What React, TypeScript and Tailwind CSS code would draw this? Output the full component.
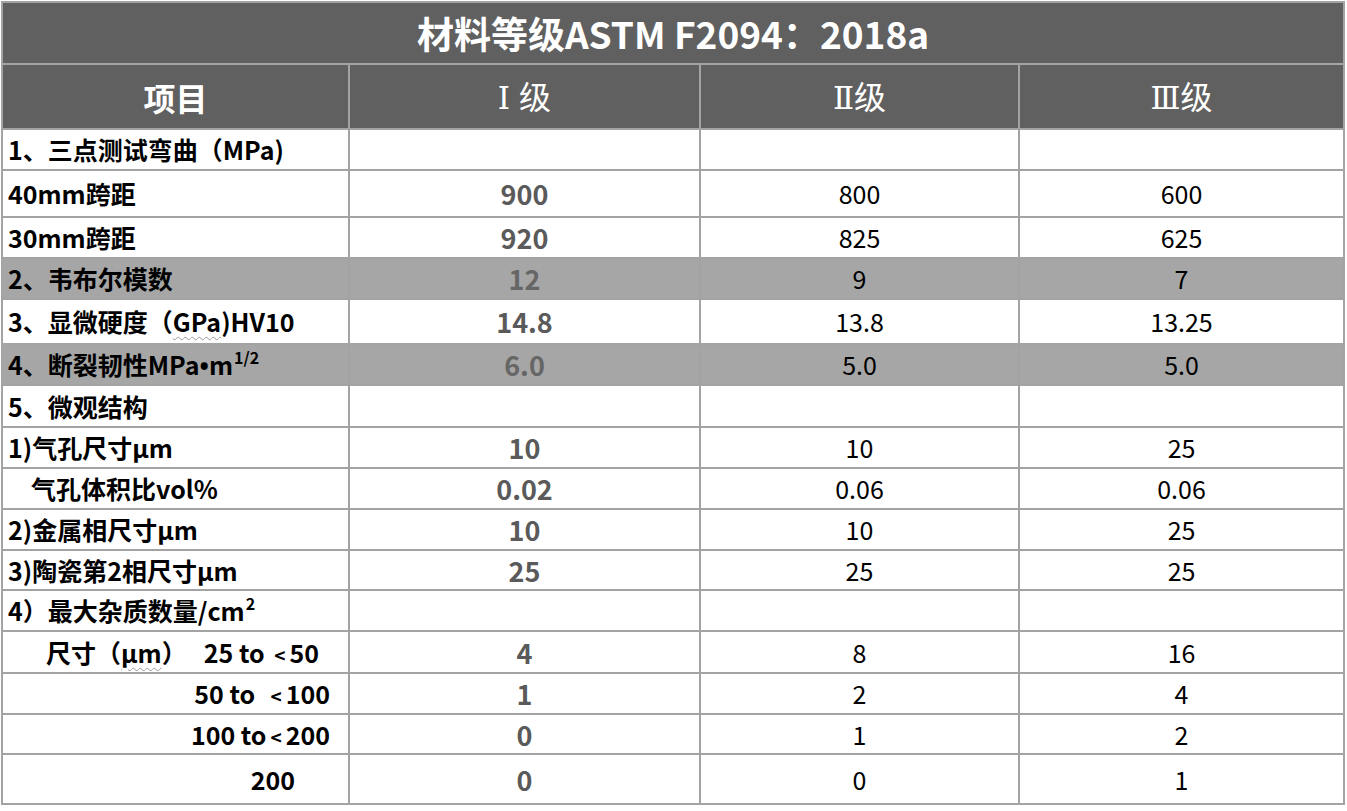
import React from "react";

type Row = {
  label: React.ReactNode;
  align?: "left" | "right";
  pad?: string;
  h: number;
  shade?: boolean;
  v?: [string, string, string];
};

const Wavy: React.FC<{ children: React.ReactNode }> = ({ children }) => (
  <span className="underline decoration-wavy decoration-[#9a9a9a] decoration-1 underline-offset-4">
    {children}
  </span>
);

const Sup: React.FC<{ children: React.ReactNode }> = ({ children }) => (
  <sup className="text-[16px] align-[3px] ml-[1px] font-bold">{children}</sup>
);

// small "<" like the reference's half-height glyph
const Lt = () => <span className="text-[19px] mx-[4px]">&lt;</span>;

const Roman: React.FC<{ children: React.ReactNode; gap?: boolean }> = ({ children, gap }) => (
  <span style={{ fontFamily: '"DejaVu Serif", serif' }} className={gap ? "text-[31px] mr-[9px]" : "text-[31px]"}>
    {children}
  </span>
);

const rows: Row[] = [
  { label: "1、三点测试弯曲（MPa)", h: 41 },
  { label: "40mm跨距", h: 47, v: ["900", "800", "600"] },
  { label: "30mm跨距", h: 41, v: ["920", "825", "625"] },
  { label: "2、韦布尔模数", h: 41, shade: true, v: ["12", "9", "7"] },
  {
    label: (
      <>
        3、显微硬度（<Wavy>GPa</Wavy>)HV10
      </>
    ),
    h: 45,
    v: ["14.8", "13.8", "13.25"],
  },
  {
    label: (
      <>
        4、断裂韧性MPa<span style={{ fontFamily: '"Open Sans", sans-serif' }}>•</span>m<Sup>1/2</Sup>
      </>
    ),
    h: 41,
    shade: true,
    v: ["6.0", "5.0", "5.0"],
  },
  { label: "5、微观结构", h: 42 },
  { label: "1)气孔尺寸μm", h: 41, v: ["10", "10", "25"] },
  { label: "气孔体积比vol%", pad: "pl-[28px]", h: 41, v: ["0.02", "0.06", "0.06"] },
  { label: "2)金属相尺寸μm", h: 41, v: ["10", "10", "25"] },
  { label: "3)陶瓷第2相尺寸μm", h: 40, v: ["25", "25", "25"] },
  {
    label: (
      <>
        4）最大杂质数量/cm<Sup>2</Sup>
      </>
    ),
    h: 41,
  },
  {
    label: (
      <>
        尺寸（<Wavy>μm</Wavy>）&nbsp;&nbsp;&nbsp;25 to <Lt />50
      </>
    ),
    pad: "pl-[43px]",
    h: 42,
    v: ["4", "8", "16"],
  },
  {
    label: (
      <>
        50 to  <Lt />100
      </>
    ),
    align: "right",
    pad: "pr-[18px]",
    h: 41,
    v: ["1", "2", "4"],
  },
  {
    label: (
      <>
        100 to<Lt />200
      </>
    ),
    align: "right",
    pad: "pr-[18px]",
    h: 40,
    v: ["0", "1", "2"],
  },
  { label: "200", align: "right", pad: "pr-[53px]", h: 50, v: ["0", "0", "1"] },
];

const border = "border-2 border-[#a3a3a3]";

export default function App() {
  return (
    <div
      className="w-[1347px] h-[811px] bg-white"
      style={{ fontFamily: '"Noto Sans CJK SC", "Noto Sans", sans-serif' }}
    >
      <table className={`table-fixed border-collapse ml-[1px] mt-[1px] w-[1342px] ${border}`}>
        <colgroup>
          <col className="w-[347px]" />
          <col className="w-[351px]" />
          <col className="w-[319px]" />
          <col className="w-[325px]" />
        </colgroup>
        <thead>
          <tr className="h-[62px] bg-[#606060]">
            <th colSpan={4} className={`${border} text-white text-[37px] font-bold leading-none`}>
              材料等级ASTM F2094：2018a
            </th>
          </tr>
          <tr className="h-[65px] bg-[#606060] text-white text-[32px] leading-none">
            <th className={`${border} font-bold`}>项目</th>
            <th className={`${border} font-normal`}>
              <Roman gap>Ⅰ</Roman>级
            </th>
            <th className={`${border} font-normal`}>
              <Roman>Ⅱ</Roman>级
            </th>
            <th className={`${border} font-normal`}>
              <Roman>Ⅲ</Roman>级
            </th>
          </tr>
        </thead>
        <tbody className="leading-none">
          {rows.map((r, i) => (
            <tr key={i} className={r.shade ? "bg-[#a6a6a6]" : "bg-white"} style={{ height: r.h }}>
              <td
                className={`${border} text-[25px] font-bold text-black whitespace-pre ${
                  r.align === "right" ? "text-right" : "text-left"
                } ${r.pad ?? "pl-[5px]"}`}
              >
                {r.label}
              </td>
              <td
                className={`${border} text-center text-[27px] font-bold ${
                  r.shade ? "text-[#666666]" : "text-[#5a5a5a]"
                }`}
              >
                {r.v?.[0]}
              </td>
              <td className={`${border} text-center text-[25px] text-black`}>{r.v?.[1]}</td>
              <td className={`${border} text-center text-[25px] text-black`}>{r.v?.[2]}</td>
            </tr>
          ))}
        </tbody>
      </table>
    </div>
  );
}
